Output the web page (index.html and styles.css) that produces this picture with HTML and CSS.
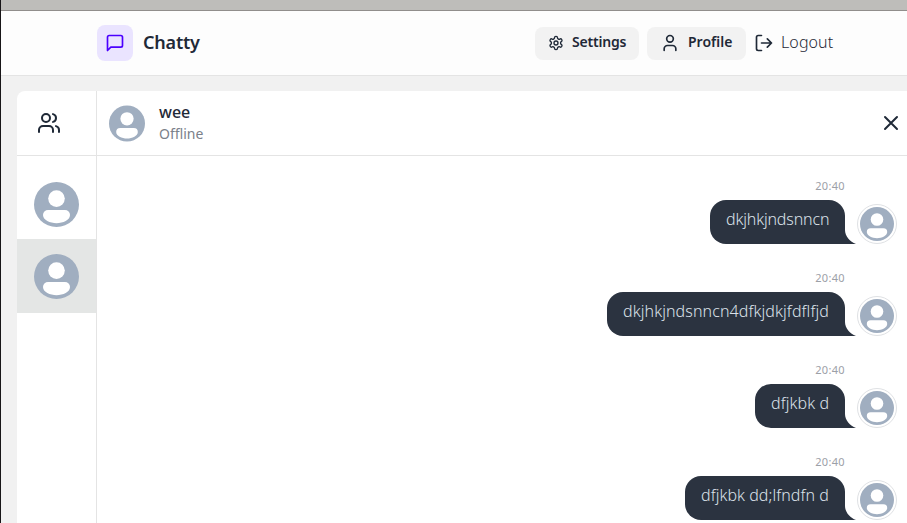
FILE: index.html
```html
<!DOCTYPE html>
<html lang="en">
<head>
<meta charset="utf-8">
<title>Chatty</title>
<link rel="stylesheet" href="styles.css">
</head>
<body>
<svg width="0" height="0" class="defs">
  <symbol id="avatar" viewBox="0 0 45 45">
    <circle cx="22.5" cy="22.5" r="22.5" fill="#a0aec0"/>
    <circle cx="22.5" cy="16.6" r="8.3" fill="#fff"/>
    <path d="M14 28h17a5 5 0 0 1 5 5c0 5-7 8.200-13.500 8.200S9 38 9 33a5 5 0 0 1 5-5z" fill="#fff"/>
  </symbol>
</svg>
<div class="window-bar"></div>
<header class="navbar">
  <div class="brand">
    <span class="logo"><svg class="icon" width="20" height="20" viewBox="0 0 24 24"><path d="M21 15a2 2 0 0 1-2 2H7l-4 4V5a2 2 0 0 1 2-2h14a2 2 0 0 1 2 2z"/></svg></span>
    <h1>Chatty</h1>
  </div>
  <nav class="actions">
    <button class="btn settings"><svg class="icon" width="16" height="16" viewBox="0 0 24 24"><path d="M12.220 2h-.44a2 2 0 0 0-2 2v.18a2 2 0 0 1-1 1.730l-.43.25a2 2 0 0 1-2 0l-.15-.08a2 2 0 0 0-2.730.73l-.22.38a2 2 0 0 0 .73 2.730l.15.1a2 2 0 0 1 1 1.720v.51a2 2 0 0 1-1 1.740l-.15.09a2 2 0 0 0-.73 2.730l.22.38a2 2 0 0 0 2.730.73l.15-.08a2 2 0 0 1 2 0l.43.25a2 2 0 0 1 1 1.730V20a2 2 0 0 0 2 2h.44a2 2 0 0 0 2-2v-.18a2 2 0 0 1 1-1.730l.43-.25a2 2 0 0 1 2 0l.15.08a2 2 0 0 0 2.730-.73l.22-.39a2 2 0 0 0-.73-2.730l-.15-.08a2 2 0 0 1-1-1.740v-.5a2 2 0 0 1 1-1.740l.15-.09a2 2 0 0 0 .73-2.730l-.22-.38a2 2 0 0 0-2.730-.73l-.15.08a2 2 0 0 1-2 0l-.43-.25a2 2 0 0 1-1-1.730V4a2 2 0 0 0-2-2z"/><circle cx="12" cy="12" r="3"/></svg><span>Settings</span></button>
    <button class="btn profile"><svg class="icon" width="20" height="20" viewBox="0 0 24 24"><path d="M19 21v-2a4 4 0 0 0-4-4H9a4 4 0 0 0-4 4v2"/><circle cx="12" cy="7" r="4"/></svg><span>Profile</span></button>
    <button class="logout"><svg class="icon" width="20" height="20" viewBox="0 0 24 24"><path d="M9 21H5a2 2 0 0 1-2-2V5a2 2 0 0 1 2-2h4M16 17l5-5-5-5M21 12H9"/></svg><span>Logout</span></button>
  </nav>
</header>
<main class="card">
  <aside class="sidebar">
    <div class="contacts-head"><svg class="icon" width="24" height="24" viewBox="0 0 24 24"><path d="M16 21v-2a4 4 0 0 0-4-4H6a4 4 0 0 0-4 4v2"/><circle cx="9" cy="7" r="4"/><path d="M22 21v-2a4 4 0 0 0-3-3.870M16 3.130a4 4 0 0 1 0 7.750"/></svg></div>
    <div class="contact first"><svg width="45" height="45"><use href="#avatar"/></svg></div>
    <div class="contact selected"><svg width="45" height="45"><use href="#avatar"/></svg></div>
  </aside>
  <section class="chat">
    <div class="chat-head">
      <svg width="36" height="37" preserveAspectRatio="none"><use href="#avatar"/></svg>
      <div class="who"><h2>wee</h2><p>Offline</p></div>
      <svg class="icon close" width="24" height="24" viewBox="0 0 24 24"><path d="M18 6L6 18M6 6l12 12"/></svg>
    </div>
    <div class="messages">
      <div class="message"><time>20:40</time><div class="bubble b1"><span>dkjhkjndsnncn</span><svg class="tail" width="11" height="14"><path d="M0 0C0 6 5 12 11 14H0z"/></svg></div><div class="ring"><svg width="34" height="34"><use href="#avatar"/></svg></div></div>
      <div class="message"><time>20:40</time><div class="bubble b2"><span>dkjhkjndsnncn4dfkjdkjfdflfjd</span><svg class="tail" width="11" height="14"><path d="M0 0C0 6 5 12 11 14H0z"/></svg></div><div class="ring"><svg width="34" height="34"><use href="#avatar"/></svg></div></div>
      <div class="message"><time>20:40</time><div class="bubble b3"><span>dfjkbk d</span><svg class="tail" width="11" height="14"><path d="M0 0C0 6 5 12 11 14H0z"/></svg></div><div class="ring"><svg width="34" height="34"><use href="#avatar"/></svg></div></div>
      <div class="message"><time>20:40</time><div class="bubble b4"><span>dfjkbk dd;lfndfn d</span><svg class="tail" width="11" height="14"><path d="M0 0C0 6 5 12 11 14H0z"/></svg></div><div class="ring"><svg width="34" height="34"><use href="#avatar"/></svg></div></div>
    </div>
  </section>
</main>
</body>
</html>
```
FILE: styles.css
```css
* { box-sizing: border-box; }
body {
  margin: 0;
  height: 523px;
  overflow: hidden;
  display: flex;
  flex-direction: column;
  background: #f1f1f1;
  border-left: 1px solid #171517;
  color: #1f2937;
  font-family: "Noto Sans", "Open Sans", sans-serif;
}
h1, h2, p { margin: 0; }
svg { display: block; flex: none; }
.defs { position: absolute; }
button { border: 0; background: none; padding: 0; font: inherit; color: inherit; }
.icon { fill: none; stroke: currentColor; stroke-width: 2; stroke-linecap: round; stroke-linejoin: round; }
.window-bar { flex: none; height: 11px; background: #bebdba; border-bottom: 1px solid #918e8c; }
.navbar {
  flex: none;
  height: 65px;
  padding: 0 74px 0 96px;
  display: flex;
  align-items: center;
  justify-content: space-between;
  background: #fdfdfd;
  border-bottom: 1px solid #e4e4e4;
}
.brand { display: flex; align-items: center; gap: 10px; }
.logo { width: 36px; height: 36px; display: grid; place-items: center; border-radius: 8px; background: #eae4ff; color: #4b00ff; }
h1 { margin-top: -2px; font-size: 18px; line-height: 28px; font-weight: 600; letter-spacing: -0.2px; }
.actions { display: flex; align-items: center; gap: 8px; }
.btn { height: 33px; display: flex; align-items: center; border-radius: 8px; background: #f2f2f2; font-size: 14px; line-height: 18px; font-weight: 600; }
.btn span { margin-top: -2px; }
.settings { width: 104px; padding-left: 13px; gap: 8px; letter-spacing: -0.2px; }
.profile { width: 99px; padding-left: 13px; gap: 8px; letter-spacing: 0; }
.logout { width: 79px; display: flex; align-items: center; gap: 7px; font-size: 16px; font-weight: 300; letter-spacing: 0.1px; }
.logout span { margin-top: -2px; }
.card { flex: 1; min-height: 0; margin: 15px 0 0 16px; display: flex; background: #fff; border-top-left-radius: 8px; overflow: hidden; }
.sidebar { flex: none; width: 80px; border-right: 1px solid #e4e4e4; }
.contacts-head { height: 65px; padding-left: 20px; display: flex; align-items: center; border-bottom: 1px solid #e4e4e4; }
.contact { display: flex; justify-content: center; align-items: center; height: 74px; }
.contact.first { height: 83px; padding-top: 13px; }
.selected { background: #e4e6e5; }
.chat { flex: 1; min-width: 0; }
.chat-head { height: 65px; padding: 0 4px 0 12px; display: flex; align-items: center; border-bottom: 1px solid #e4e4e4; }
.who { flex: 1; margin: -1px 0 0 14px; }
h2 { font-size: 16px; line-height: 21px; font-weight: 500; }
.who p { font-size: 14px; line-height: 21px; color: #7b818a; }
.messages { padding: 20px 10px 0 0; }
.message {
  height: 92px;
  display: grid;
  grid-template-columns: 1fr 40px;
  grid-template-rows: 24px 44px;
  column-gap: 12px;
  justify-items: end;
}
time { font-size: 11px; line-height: 19px; letter-spacing: 0.35px; color: #9ca0a7; }
.bubble { grid-row: 2; position: relative; height: 44px; padding: 8px 0 0 16px; border-radius: 16px 16px 0 16px; background: #2b3340; color: #dce2ea; font-size: 16px; font-weight: 300; line-height: 22px; white-space: nowrap; }
.b1 { width: 135px; letter-spacing: -0.15px; }
.b2 { width: 238px; letter-spacing: 0.1px; }
.b3 { width: 90px; letter-spacing: 0.1px; }
.b4 { width: 160px; letter-spacing: 0.06px; }
.tail { position: absolute; left: 100%; bottom: 0; fill: #2b3340; }
.ring { grid-row: 2; grid-column: 2; align-self: end; width: 40px; height: 40px; display: grid; place-items: center; border: 1px solid #dfe1e4; border-radius: 50%; }
```
